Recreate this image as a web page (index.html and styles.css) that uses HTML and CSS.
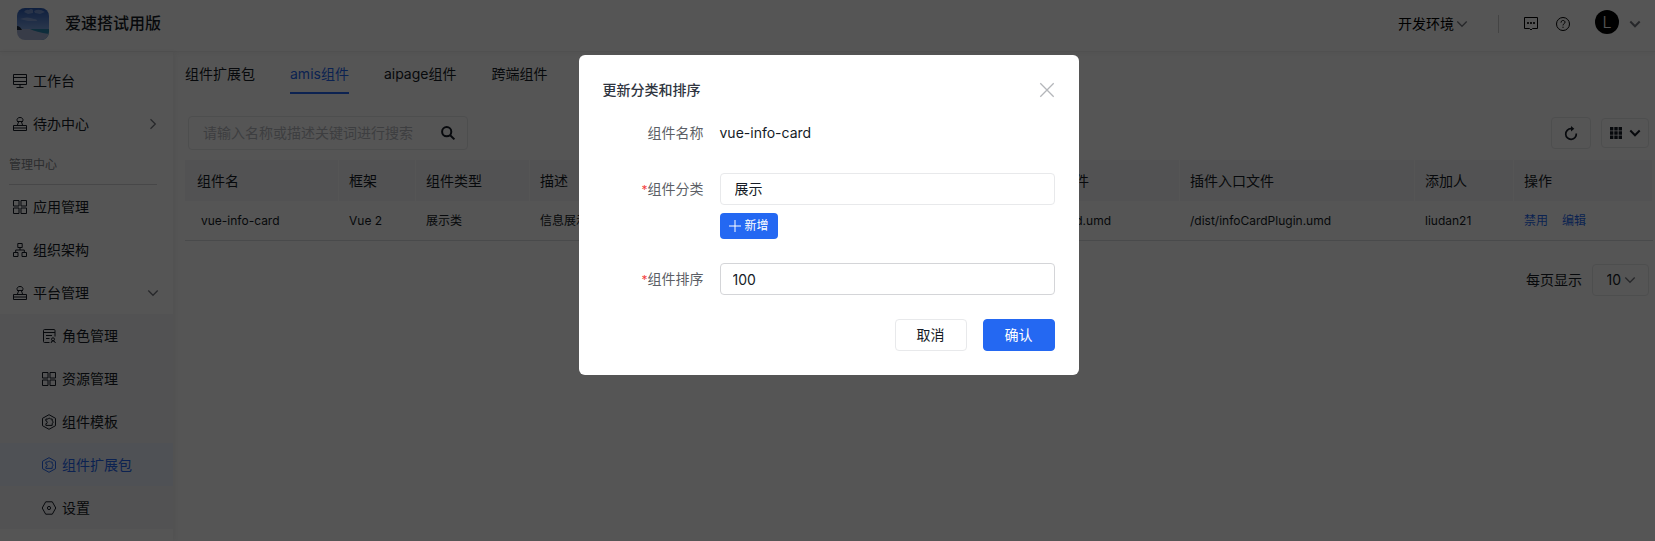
FILE: index.html
```html
<!DOCTYPE html>
<html lang="zh-CN">
<head>
<meta charset="utf-8">
<meta name="viewport" content="width=device-width, initial-scale=1">
<title>爱速搭试用版</title>
<link rel="stylesheet" href="styles.css">
</head>
<body>
<svg class="sprite" aria-hidden="true">
  <symbol id="desk" viewBox="0 0 14 14"><path d="M.5.500h13v10H.5zM.5 3.500h13M.5 7.500h13M7 10.500v3M3.500 13.500h7"/></symbol>
  <symbol id="stamp" viewBox="0 0 14 14"><path d="M5.500 5C2.800 3.500 4 .5 7 .5S11.200 3.500 8.500 5M4 4.500h6M5.500 5 4.300 8.500M8.500 5l1.200 3.500M.5 8.500h13v5H.5zM.5 11h13"/></symbol>
  <symbol id="apps" viewBox="0 0 14 14"><path d="M.5.500h5.500v5.500H.5zM8 .5h5.500v5.500H8zM.5 8h5.500v5.500H.5zM8 8h5.500v5.500H8z"/></symbol>
  <symbol id="org" viewBox="0 0 14 14"><path d="M4.800.500h4.400v4H4.800zM.5 9.500h4.500v4H.5zM9 9.500h4.500v4H9zM7 4.500V7M2.700 9.500V7h8.600v2.500"/></symbol>
  <symbol id="role" viewBox="0 0 14 14"><path d="M7.500 13.500H2.500a1 1 0 0 1-1-1v-11a1 1 0 0 1 1-1h9.500a1 1 0 0 1 1 1v6M1.500 3.500H13M4 6.500h6M4 9.500h3.500M9 14l1-2h2l1.500 2"/><circle cx="11" cy="10.300" r="1.500"/></symbol>
  <symbol id="plugin" viewBox="0 0 14 14"><path d="M7-.3 13.500 3.300v7.400L7 14.300.5 10.700V3.300z"/><path d="M3.900 4h2.200a1.300 1.300 0 0 1 2.400 0h1.700v1.900a1.300 1.300 0 0 1 0 2.500v2H3.900V8.700a1.300 1.300 0 0 0 0-2.700z"/></symbol>
  <symbol id="setting" viewBox="0 0 14 14"><path d="M3.700.8h6.600L13.800 7l-3.500 6.200H3.700L.2 7z"/><circle cx="7" cy="7" r="1.600"/></symbol>
  <symbol id="down" viewBox="0 0 10 10"><path d="m.3 2.500 4.700 4.800 4.700-4.800"/></symbol>
  <symbol id="right" viewBox="0 0 10 10"><path d="m2.500.3 4.800 4.700-4.800 4.700"/></symbol>
</svg>

<header class="topbar">
  <svg class="logo" viewBox="0 0 32 32" aria-hidden="true">
    <defs>
      <linearGradient id="sky" x1="0" y1="0" x2="0" y2="1"><stop offset="0" stop-color="#2a5cb8"/><stop offset="1" stop-color="#7fa4e4"/></linearGradient>
      <clipPath id="round"><rect width="32" height="32" rx="8"/></clipPath>
    </defs>
    <g clip-path="url(#round)">
      <path fill="url(#sky)" d="M0 0h32v21H0z"/>
      <path fill="#a9bdea" opacity=".6" d="M7 4q2-3 5-2 2-2 4 0v3l-5 1zM17 3q5-3 11 1l-5 2-5-1zM3 11q7-3 14 0 3 0 3 2l-9 0z"/>
      <path fill="#2c86b0" d="M12 21h20v11H12z"/>
      <path fill="#a8b4d8" d="M0 21l13 0q6 3 19 5v6H0z"/>
      <path fill="#1c2c40" d="M0 18q3 0 5 4H0z"/>
    </g>
  </svg>
  <h1 class="brand">爱速搭试用版</h1>
  <div class="tools">
    <button class="plain env">开发环境<svg class="ico chev soft"><use href="#down"/></svg></button>
    <span class="rule"></span>
    <button class="plain" aria-label="消息"><svg class="ico" viewBox="0 0 14 14"><path d="M.5.500h13v11H8.500L7 13l-1.500-1.500h-5z"/><path class="heavy" d="M3.200 6h1.600M6.200 6h1.600M9.200 6h1.600"/></svg></button>
    <button class="plain help" aria-label="帮助"><svg class="ico" viewBox="0 0 14 14"><circle cx="7" cy="7" r="6.500"/><path d="M5 5.600C5 2.700 9 2.900 9 5.300 9 6.700 7 6.700 7 8.400M7 9.700v1.200"/></svg></button>
    <button class="plain user"><span class="avatar">L</span><svg class="ico chev soft bold"><use href="#down"/></svg></button>
  </div>
</header>

<div class="shell">
  <nav class="side">
    <a class="item" href="#"><svg class="ico"><use href="#desk"/></svg>工作台</a>
    <a class="item" href="#"><svg class="ico"><use href="#stamp"/></svg>待办中心<svg class="ico chev soft end"><use href="#right"/></svg></a>
    <div class="group">管理中心</div>
    <a class="item" href="#"><svg class="ico"><use href="#apps"/></svg>应用管理</a>
    <a class="item" href="#"><svg class="ico"><use href="#org"/></svg>组织架构</a>
    <a class="item" href="#"><svg class="ico"><use href="#stamp"/></svg>平台管理<svg class="ico chev soft end"><use href="#down"/></svg></a>
    <div class="sub">
      <a class="item" href="#"><svg class="ico"><use href="#role"/></svg>角色管理</a>
      <a class="item" href="#"><svg class="ico"><use href="#apps"/></svg>资源管理</a>
      <a class="item" href="#"><svg class="ico"><use href="#plugin"/></svg>组件模板</a>
      <a class="item active" href="#"><svg class="ico"><use href="#plugin"/></svg>组件扩展包</a>
      <a class="item" href="#"><svg class="ico"><use href="#setting"/></svg>设置</a>
    </div>
  </nav>

  <main class="main">
    <div class="tabs">
      <a class="tab" href="#">组件扩展包</a>
      <a class="tab current" href="#">amis组件</a>
      <a class="tab" href="#">aipage组件</a>
      <a class="tab" href="#">跨端组件</a>
    </div>
    <div class="bar">
      <div class="search">
        <input type="text" aria-label="搜索组件" placeholder="请输入名称或描述关键词进行搜索">
        <button class="plain" aria-label="搜索"><svg class="ico find" viewBox="0 0 14 14"><circle cx="5.700" cy="5.700" r="4.600"/><path d="m9.200 9.200 4.200 4.200"/></svg></button>
      </div>
      <div class="actions">
        <button class="box refresh" aria-label="刷新"><svg class="ico turn" viewBox="0 0 14 14"><path d="M12.300 7.500A5.300 5.300 0 1 1 7 2.700h1"/><path class="fill" d="M7 0v5.400l3.300-2.700z"/></svg></button>
        <button class="box columns" aria-label="显示列"><svg class="ico grid" viewBox="0 0 12 12"><path class="fill" d="M0 0h3.400v3.400H0zM4.300 0h3.400v3.400H4.300zM8.600 0H12v3.400H8.600zM0 4.300h3.400v3.400H0zM4.300 4.300h3.400v3.400H4.300zM8.600 4.300H12v3.400H8.600zM0 8.600h3.400V12H0zM4.300 8.600h3.400V12H4.300zM8.600 8.600H12V12H8.600z"/></svg><svg class="ico chev bold"><use href="#down"/></svg></button>
      </div>
    </div>
    <table class="grid-table">
      <colgroup><col class="c-name"><col class="c-frame"><col class="c-type"><col><col class="c-entry"><col class="c-plugin"><col class="c-user"><col class="c-ops"></colgroup>
      <thead><tr><th>组件名</th><th>框架</th><th>组件类型</th><th>描述</th><th>组件入口文件</th><th>插件入口文件</th><th>添加人</th><th>操作</th></tr></thead>
      <tbody><tr><td>vue-info-card</td><td>Vue 2</td><td>展示类</td><td>信息展示</td><td>/dist/infoCard.umd</td><td>/dist/infoCardPlugin.umd</td><td>liudan21</td><td><div class="ops"><a href="#">禁用</a><a href="#">编辑</a></div></td></tr></tbody>
    </table>
    <div class="pager">
      <label for="size">每页显示</label>
      <div class="box size"><select id="size"><option>10</option></select><svg class="ico chev soft"><use href="#down"/></svg></div>
    </div>
  </main>
</div>

<div class="mask">
  <form class="dialog" role="dialog" aria-labelledby="dlg-title">
    <div class="dialog-head">
      <h2 id="dlg-title">更新分类和排序</h2>
      <button type="button" class="plain close" aria-label="关闭"><svg class="ico" viewBox="0 0 14 14"><path d="m.3.300 13.400 13.400M13.700.300.3 13.700"/></svg></button>
    </div>
    <div class="field">
      <span class="label">组件名称</span>
      <div class="value">vue-info-card</div>
    </div>
    <div class="field">
      <label class="label" for="cat"><span class="star">*</span>组件分类</label>
      <div class="control">
        <select id="cat" class="entry"><option>展示</option></select>
        <button type="button" class="add"><svg class="ico" viewBox="0 0 12 12"><path d="M6 0v12M0 6h12"/></svg>新增</button>
      </div>
    </div>
    <div class="field">
      <label class="label" for="order"><span class="star">*</span>组件排序</label>
      <div class="control"><input id="order" class="entry number" type="text" value="100"></div>
    </div>
    <div class="dialog-foot">
      <button type="button" class="btn">取消</button>
      <button type="button" class="btn primary">确认</button>
    </div>
  </form>
</div>
</body>
</html>
```
FILE: styles.css
```css
* { box-sizing: border-box; }
body {
  margin: 0;
  min-height: 100vh;
  display: flex;
  flex-direction: column;
  background: #fff;
  color: #151b26;
  font: 14px/22px Inter, "Noto Sans CJK SC", sans-serif;
}
button, input, select { font: inherit; color: inherit; }
a { color: inherit; text-decoration: none; }
h1, h2 { margin: 0; }
.sprite { display: none; }
.ico { width: 14px; height: 14px; flex: none; display: block; overflow: visible; fill: none; stroke: currentColor; stroke-width: 1; }
symbol { overflow: visible; }
.chev { width: 10px; height: 10px; stroke-width: 1.3; }
.soft { color: #74777e; }
.bold { stroke-width: 2; }
.turn { stroke-width: 1.7; }
.heavy { stroke-width: 2; }
.fill { fill: currentColor; stroke: none; }
.plain { display: flex; align-items: center; padding: 0; border: 0; background: none; }

.topbar { display: flex; align-items: center; height: 52px; padding: 0 15px 4px 17px; border-bottom: 1px solid #f0f0f0; box-shadow: 0 2px 4px rgba(0, 0, 0, .04); }
.logo { width: 32px; height: 32px; margin-right: 16px; }
.brand { font-size: 16px; line-height: 22px; font-weight: 500; margin-bottom: 2px; }
.tools { display: flex; align-items: center; margin-left: auto; color: #000; }
.env { gap: 3px; }
.rule { width: 1px; height: 18px; margin: 0 25px 0 31px; background: #ccc; }
.help { margin: 0 25px 0 18px; }
.user { gap: 11px; }
.avatar { width: 24px; height: 24px; margin-bottom: 3px; border-radius: 50%; background: #000; color: #fff; line-height: 24px; font-size: 16px; font-weight: 300; text-align: center; }

.shell { flex: 1; display: flex; }
.side { width: 173px; flex: none; padding-top: 7px; box-shadow: 2px 0 6px rgba(0, 0, 0, .06); }
.item { display: flex; align-items: center; gap: 6px; height: 43px; padding: 0 15px 0 13px; }
.end { margin-left: auto; }
.group { margin: 0 16px 0 9px; height: 40px; border-bottom: 1px solid #d4d5d8; color: #84868c; font-size: 12px; line-height: 40px; }
.sub { background: #f7f7f9; }
.sub .item { padding-left: 42px; }
.active { background: #eef3fe; }
.active, .current { color: #2468f2; }

.main { flex: 1; min-width: 0; padding: 0 2px 0 12px; }
.tabs { display: flex; gap: 35px; }
.tab { padding: 11px 0 7px; border-bottom: 2px solid transparent; }
.current { border-color: #2468f2; }
.bar { display: flex; justify-content: space-between; align-items: center; padding: 22px 4px 10px 3px; }
.search { display: flex; align-items: center; width: 280px; height: 34px; padding: 0 12px 0 14px; border: 1px solid #e8e9eb; border-radius: 4px; }
.search input { flex: 1; min-width: 0; padding: 0; border: 0; outline: 0; background: none; }
.search input::placeholder { color: #b8babf; opacity: 1; }
.find { stroke-width: 2; }
.actions { display: flex; align-items: center; gap: 10px; }
.box { display: flex; align-items: center; justify-content: center; padding: 0; border: 1px solid #e8e9eb; border-radius: 4px; background: none; }
.refresh { width: 40px; height: 32px; }
.columns { width: 48px; height: 30px; gap: 8px; }
.grid { width: 12px; height: 12px; }

.grid-table { width: 100%; table-layout: fixed; border-collapse: separate; border-spacing: 0; text-align: left; }
.grid-table th { height: 41px; padding: 0 10px; background: #f7f7f9; border-right: 1px solid #fff; font-weight: 400; }
.grid-table td { height: 40px; padding: 0 10px; border-bottom: 1px solid #dcdde0; font-size: 12px; }
.grid-table th:first-child { padding-left: 12px; }
.grid-table td:first-child { padding-left: 16px; }
.c-name { width: 154px; }
.c-frame { width: 77px; }
.c-type { width: 114px; }
.c-entry { width: 185px; }
.c-plugin { width: 235px; }
.c-user { width: 99px; }
.c-ops { width: 139px; }
.ops { display: flex; gap: 14px; color: #2468f2; }
.pager { display: flex; justify-content: flex-end; align-items: center; gap: 10px; padding: 23px 4px; }
.size { width: 57px; height: 32px; }
.size select { width: 18px; padding: 0; border: 0; background: none; appearance: none; }

.mask { position: fixed; inset: 0; display: flex; justify-content: center; align-items: flex-start; padding: 55px 16px 16px 18px; background: rgba(0, 0, 0, .667); }
.dialog { width: 500px; padding: 24px; border-radius: 6px; background: #fff; display: grid; gap: 24px; }
.dialog-head { display: flex; justify-content: space-between; align-items: center; margin-bottom: -8px; }
.dialog-head h2 { font-size: 14px; line-height: 22px; font-weight: 500; color: #303540; }
.close { color: #b4b6ba; margin-right: 1px; }
.close .ico { stroke-width: 1.3; }
.field { display: flex; gap: 16px; }
.label { width: 101px; height: 32px; text-align: right; line-height: 32px; color: #5c5f66; }
.star { color: #f33e3e; font-size: 12px; line-height: 1; }
.value { line-height: 32px; }
.control { flex: 1; display: grid; gap: 8px; justify-items: start; }
.entry { width: 100%; height: 32px; padding: 0 14px; border: 1px solid #e8e9eb; border-radius: 4px; background: #fff; appearance: none; outline: 0; }
.number { padding: 0 12px; border-color: #d4d5d8; }
.add { display: flex; align-items: center; gap: 4px; height: 26px; padding: 0 9px; border: 0; border-radius: 4px; background: #2468f2; color: #fff; font-size: 12px; }
.add .ico { width: 12px; height: 12px; }
.dialog-foot { display: flex; justify-content: flex-end; gap: 16px; }
.btn { width: 72px; height: 32px; padding: 0; border: 1px solid #e8e9eb; border-radius: 4px; background: #fff; }
.primary { border-color: #2468f2; background: #2468f2; color: #fff; }
```
